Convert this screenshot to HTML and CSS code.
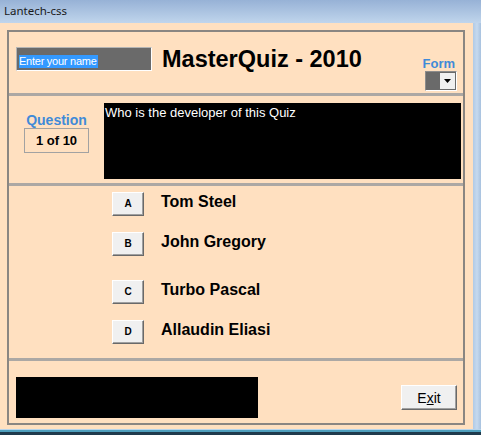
FILE: index.html
```html
<!DOCTYPE html>
<html>
<head>
<meta charset="utf-8">
<link rel="stylesheet" href="styles.css">
</head>
<body>
<div class="window">
  <div class="titlebar">Lantech-css</div>
  <div class="middle">
    <div class="client">
      <div class="frame">
        <div class="section top">
          <div class="name-input"><span class="sel">Enter your name</span></div>
          <div class="app-title">MasterQuiz - 2010</div>
          <div class="form-col">
            <div class="form-label">Form</div>
            <div class="combo"><div class="combo-btn"><svg width="7" height="4" viewBox="0 0 7 4"><polygon points="0,0 7,0 3.5,4" fill="#000"/></svg></div></div>
          </div>
        </div>
        <div class="section question">
          <div class="q-col">
            <div class="q-label">Question</div>
            <div class="q-count">1 of 10</div>
          </div>
          <div class="q-text">Who is the developer of this Quiz</div>
        </div>
        <div class="section answers">
          <div class="answer"><button class="ans-btn">A</button><span class="ans-text">Tom Steel</span></div>
          <div class="answer"><button class="ans-btn">B</button><span class="ans-text">John Gregory</span></div>
          <div class="answer spaced"><button class="ans-btn">C</button><span class="ans-text">Turbo Pascal</span></div>
          <div class="answer"><button class="ans-btn">D</button><span class="ans-text">Allaudin Eliasi</span></div>
        </div>
        <div class="section footer">
          <div class="status"></div>
          <button class="exit-btn">E<u>x</u>it</button>
        </div>
      </div>
    </div>
    <div class="right-edge"></div>
  </div>
  <div class="bottom-edge"></div>
</div>
</body>
</html>
```
FILE: styles.css
```css
html, body {
  margin: 0;
  padding: 0;
}
body {
  width: 481px;
  height: 435px;
  overflow: hidden;
  font-family: "Liberation Sans", Arial, sans-serif;
  background: #ffe0c0;
}
.window {
  display: flex;
  flex-direction: column;
  height: 435px;
}
.titlebar {
  height: 23px;
  box-sizing: border-box;
  padding-left: 4px;
  background: linear-gradient(#97b2d6, #c0d5ec);
  font-family: "Noto Sans", sans-serif;
  font-size: 11.5px;
  line-height: 22px;
  color: #1a1a1a;
}
.middle {
  display: flex;
  flex: 1;
}
.client {
  flex: 1;
  background: #ffe0c0;
  padding: 7px 8px 4px 7px;
}
.right-edge {
  width: 8px;
  background: linear-gradient(to right, #b0cae6, #c6d9ee 50%, #a8c2df);
}
.bottom-edge {
  height: 6px;
  background: linear-gradient(#b8d4ea 0, #b8d4ea 1px, #4e9fbd 1px, #4e9fbd 3px, #1f3a4c 3px);
}
.frame {
  height: 395px;
  box-sizing: border-box;
  border: 2px solid #8a8682;
  display: flex;
  flex-direction: column;
}
.section {
  display: flex;
  align-items: flex-start;
  border-bottom: 3px solid #aca8a4;
  flex-shrink: 0;
}
.section.top { height: 61px; }
.section.question { height: 87px; }
.section.answers { height: 166px; padding-top: 6px; flex-direction: column; }
.section.footer { height: 62px; border-bottom: none; }

/* top */
.name-input {
  margin: 15px 0 0 7px;
  width: 136px;
  height: 24px;
  box-sizing: border-box;
  background: #6a6a6a;
  border: 1px solid;
  border-color: #b4b4b4 #ffffff #ffffff #b4b4b4;
  padding: 3px 0 0 2px;
}
.sel {
  display: inline-block;
  background: #3399ff;
  color: #fff;
  font-size: 11px;
  letter-spacing: -0.25px;
  line-height: 13px;
  padding-right: 1px;
}
.app-title {
  margin: 16px 0 0 10px;
  font-size: 23.5px;
  font-weight: bold;
  line-height: 1;
  color: #000;
}
.form-col {
  margin: 25px 6px 0 auto;
  display: flex;
  flex-direction: column;
  align-items: flex-end;
}
.form-label {
  font-size: 13px;
  font-weight: bold;
  line-height: 13px;
  color: #3f8ad8;
  margin-right: 2px;
  margin-bottom: 1px;
}
.combo {
  width: 32px;
  height: 20px;
  box-sizing: border-box;
  background: #6a6a6a;
  border: 1px solid;
  border-color: #8c8c8c #ffffff #ffffff #8c8c8c;
  display: flex;
  justify-content: flex-end;
  padding: 1px;
}
.combo-btn {
  width: 15px;
  height: 16px;
  background: #f0f0f0;
  display: flex;
  align-items: center;
  justify-content: center;
}

/* question */
.q-col {
  margin: 17px 0 0 15px;
  width: 65px;
  display: flex;
  flex-direction: column;
  align-items: center;
}
.q-label {
  font-size: 14px;
  font-weight: bold;
  line-height: 14px;
  color: #3f8ad8;
  margin-bottom: 1px;
}
.q-count {
  width: 65px;
  height: 25px;
  box-sizing: border-box;
  border: 1px solid #a2a2a2;
  text-align: center;
  font-size: 13px;
  font-weight: bold;
  line-height: 24px;
  color: #000;
}
.q-text {
  margin: 7px 0 0 15px;
  width: 357px;
  height: 76px;
  box-sizing: border-box;
  background: #000;
  color: #fff;
  font-size: 13px;
  line-height: 13px;
  padding: 3px 0 0 1px;
}

/* answers */
.answers {
  gap: 16px;
}
.answer {
  display: flex;
  align-items: flex-start;
  margin-left: 103px;
}
.answer.spaced {
  margin-top: 8px;
}
.ans-btn {
  width: 32px;
  height: 24px;
  box-sizing: border-box;
  margin: 0;
  padding: 0;
  background: #f0f0f0;
  border: 1px solid;
  border-color: #ffffff #696969 #696969 #ffffff;
  box-shadow: inset -1px -1px 0 #a0a0a0;
  font-family: "Liberation Sans", Arial, sans-serif;
  font-size: 10px;
  font-weight: bold;
  color: #000;
  line-height: 22px;
}
.ans-text {
  margin: 2px 0 0 17px;
  font-size: 16px;
  font-weight: bold;
  line-height: 16px;
  color: #000;
}

/* footer */
.status {
  margin: 16px 0 0 7px;
  width: 242px;
  height: 41px;
  background: #000;
}
.exit-btn {
  margin: 24px 6px 0 auto;
  width: 56px;
  height: 25px;
  box-sizing: border-box;
  padding: 0;
  background: #f0f0f0;
  border: 1px solid;
  border-color: #ffffff #696969 #696969 #ffffff;
  box-shadow: inset -1px -1px 0 #a0a0a0;
  font-family: "Liberation Sans", Arial, sans-serif;
  font-size: 14px;
  color: #000;
  line-height: 22px;
}
```
